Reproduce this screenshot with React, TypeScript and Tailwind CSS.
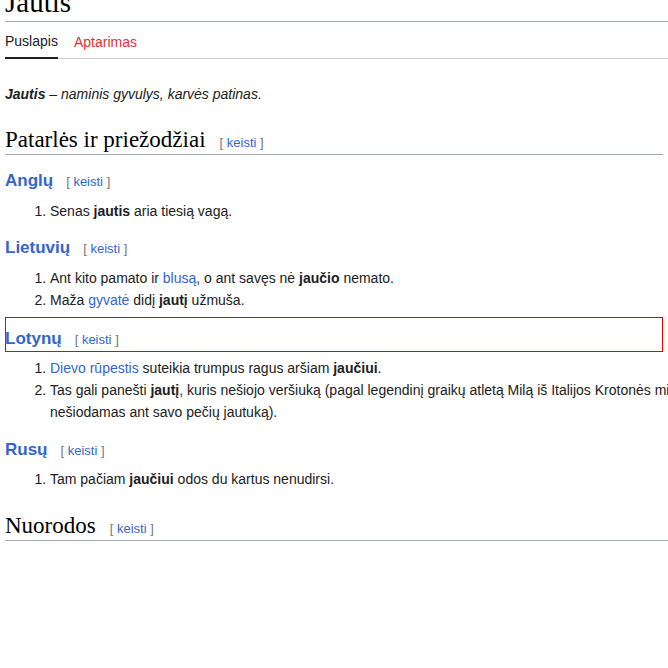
import React from "react";

const sans = "font-['Liberation_Sans',Arial,sans-serif]";
const serif = "font-['Liberation_Serif','Times_New_Roman',serif]";

function Keisti({ className = "" }: { className?: string }) {
  return (
    <span className={`${sans} text-[13px] leading-[20px] text-[#72777d] ${className}`}>
      [ <span className="text-[#3366cc]">keisti</span> ]
    </span>
  );
}

function SectionTitle({ title, className = "" }: { title: string; className?: string }) {
  return (
    <h2 className={`flex items-baseline border-b border-[#a2a9b1] ${className}`}>
      <span className={`${serif} text-[23px] leading-[28px] text-[#000]`}>{title}</span>
      <Keisti className="ml-[14px]" />
    </h2>
  );
}

function Lang({ name, className = "" }: { name: string; className?: string }) {
  return (
    <h3 className={`flex items-baseline ${className}`}>
      <span className={`${sans} text-[17px] font-bold leading-[24px] text-[#3366cc]`}>{name}</span>
      <Keisti className="ml-[13px]" />
    </h3>
  );
}

function List({ children, className = "" }: { children: React.ReactNode; className?: string }) {
  return (
    <ol className={`list-decimal pl-[45px] text-[14px] leading-[22px] text-[#202122] ${className}`}>
      {children}
    </ol>
  );
}

const A = ({ children }: { children: React.ReactNode }) => (
  <span className="text-[#3366cc]">{children}</span>
);

export default function App() {
  return (
    <div className={`h-[668px] w-[668px] overflow-hidden bg-white ${sans}`}>
      <div className="w-[658px] pl-[5px] box-content">
        <div className="-mr-[5px] flex h-[22px] flex-col border-b border-[#a2a9b1]">
          <h1 className={`${serif} -mt-[12px] text-[29px] leading-[29px] text-black`}>Jautis</h1>
        </div>

        <nav className="-mr-[5px] flex h-[37px] gap-4 border-b border-[#c8ccd1] text-[14px]">
          <span className="-mb-px flex h-[37px] items-center border-b-2 border-[#202122] pt-[3px] text-[#202122]">
            Puslapis
          </span>
          <span className="flex h-[36px] items-center pt-[4px] text-[#dd3333]">Aptarimas</span>
        </nav>

        <p className="mt-[24px] text-[14px] italic leading-[22px] text-[#202122]">
          <b>Jautis</b> – naminis gyvulys, karvės patinas.
        </p>

        <SectionTitle title="Patarlės ir priežodžiai" className="mt-[21px]" />

        <Lang name="Anglų" className="mt-[14px]" />
        <List className="mt-[7px]">
          <li>
            Senas <b>jautis</b> aria tiesią vagą.
          </li>
        </List>

        <Lang name="Lietuvių" className="mt-[14px]" />
        <List className="mt-[7px]">
          <li>
            Ant kito pamato ir <A>blusą</A>, o ant savęs nė <b>jaučio</b> nemato.
          </li>
          <li>
            Maža <A>gyvatė</A> didį <b>jautį</b> užmuša.
          </li>
        </List>

        <div className="mt-[6px] border border-[#ee0000] pt-[9px]">
          <Lang name="Lotynų" className="-ml-px" />
        </div>
        <List className="mt-[5px]">
          <li>
            <A>Dievo rūpestis</A> suteikia trumpus ragus aršiam <b>jaučiui</b>.
          </li>
          <li className="whitespace-nowrap">
            Tas gali panešti <b>jautį</b>, kuris nešiojo veršiuką (pagal legendinį graikų atletą Milą iš Italijos Krotonės miesto,
            <br />
            nešiodamas ant savo pečių jautuką).
          </li>
        </List>

        <Lang name="Rusų" className="mt-[15px]" />
        <List className="mt-[6px]">
          <li>
            Tam pačiam <b>jaučiui</b> odos du kartus nenudirsi.
          </li>
        </List>

        <SectionTitle title="Nuorodos" className="mt-[22px] -mr-[5px]" />
      </div>
    </div>
  );
}
